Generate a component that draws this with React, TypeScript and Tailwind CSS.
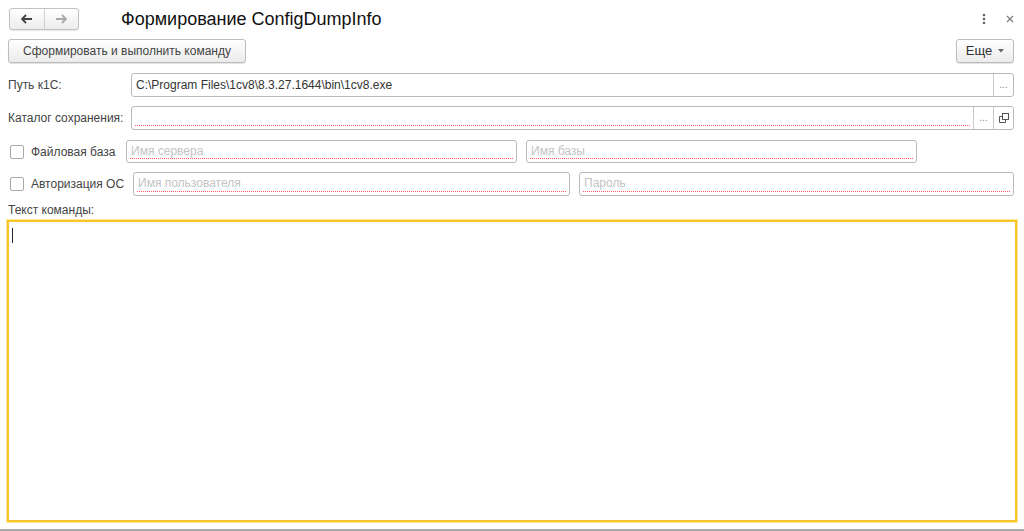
import React from 'react'

function Field({ value, placeholder, required, className = '', children }: { value?: string; placeholder?: string; required?: boolean; className?: string; children?: React.ReactNode }) {
  return (
    <div className={`flex h-[24px] border border-[#b9b9b9] rounded-[3px] bg-white overflow-hidden ${className}`}>
      <div className="flex-1 px-[3px] pt-[2px] pb-[3px] flex">
        <div className={`flex-1 flex items-center pl-[1px] ${required ? 'border-b border-dotted border-[#ff5c5c]' : ''}`}>
          {value ? (
            <span className="text-[#333]">{value}</span>
          ) : (
            <span className="text-[#c4c4c4]">{placeholder}</span>
          )}
        </div>
      </div>
      {children}
    </div>
  )
}

function Checkbox({ label, width }: { label: string; width: string }) {
  return (
    <div className={`flex items-center gap-[7px] pl-[10px] shrink-0 whitespace-nowrap ${width}`}>
      <div className="w-[14px] h-[14px] border border-[#a9a9a9] rounded-[2px] bg-white" />
      <span className="text-[#444]">{label}</span>
    </div>
  )
}

export default function App() {
  return (
    <div
      className="w-[1024px] h-[531px] bg-white flex flex-col text-[12px] overflow-hidden"
      style={{ fontFamily: '"Liberation Sans", Arial, sans-serif' }}
    >
      {/* Header */}
      <div className="flex items-center h-[22px] mt-[8px] pl-[9px] pr-[10px]">
        <div className="flex h-[22px] w-[70px] border border-[#c2c2c2] rounded-[3px] bg-gradient-to-b from-white to-[#ececec] shadow-[0_1px_1px_rgba(0,0,0,0.1)]">
          <div className="flex-1 flex items-center justify-center border-r border-[#d0d0d0]">
            <svg width="12" height="10" viewBox="0 0 12 10">
              <path d="M1 5h10M5 1L1 5l4 4" stroke="#444" strokeWidth="1.8" fill="none" />
            </svg>
          </div>
          <div className="flex-1 flex items-center justify-center">
            <svg width="12" height="10" viewBox="0 0 12 10">
              <path d="M1 5h10M7 1l4 4-4 4" stroke="#a8a8a8" strokeWidth="1.8" fill="none" />
            </svg>
          </div>
        </div>
        <div className="ml-[42px] text-[18px] text-[#111]">Формирование ConfigDumpInfo</div>
        <div className="ml-auto flex items-center gap-[20px]">
          <svg width="4" height="12" viewBox="0 0 4 12">
            <circle cx="2" cy="2" r="1.3" fill="#666" />
            <circle cx="2" cy="6" r="1.3" fill="#666" />
            <circle cx="2" cy="10" r="1.3" fill="#666" />
          </svg>
          <svg width="8" height="8" viewBox="0 0 8 8">
            <path d="M1 1l6 6M7 1L1 7" stroke="#777" strokeWidth="1.1" />
          </svg>
        </div>
      </div>

      {/* Command bar */}
      <div className="flex items-center mt-[9px] px-[8px]">
        <button className="h-[24px] w-[238px] border border-[#bdbdbd] rounded-[3px] bg-gradient-to-b from-white to-[#ebebeb] shadow-[0_1px_1px_rgba(0,0,0,0.12)] text-[#444]">
          Сформировать и выполнить команду
        </button>
        <button className="ml-auto mr-[2px] h-[24px] w-[58px] border border-[#bdbdbd] rounded-[3px] bg-gradient-to-b from-white to-[#ebebeb] shadow-[0_1px_1px_rgba(0,0,0,0.12)] text-[#333] text-[13px] flex items-center justify-center gap-[6px]">
          Еще
          <svg width="6" height="4" viewBox="0 0 6 4">
            <path d="M0 0h6L3 3.5z" fill="#666" />
          </svg>
        </button>
      </div>

      {/* Path */}
      <div className="flex items-center mt-[10px] pl-[8px] pr-[10px]">
        <span className="w-[123px] shrink-0 whitespace-nowrap text-[#444]">Путь к1С:</span>
        <Field value="C:\Program Files\1cv8\8.3.27.1644\bin\1cv8.exe" className="flex-1">
          <div className="w-[20px] border-l border-[#c9c9c9] flex items-end justify-center pb-[6px] text-[#888] text-[10px] leading-none">...</div>
        </Field>
      </div>

      {/* Save dir */}
      <div className="flex items-center mt-[9px] pl-[8px] pr-[10px]">
        <span className="w-[123px] shrink-0 whitespace-nowrap text-[#444]">Каталог сохранения:</span>
        <Field required className="flex-1">
          <div className="w-[20px] border-l border-[#c9c9c9] flex items-end justify-center pb-[6px] text-[#888] text-[10px] leading-none">...</div>
          <div className="w-[20px] border-l border-[#c9c9c9] flex items-center justify-center">
            <svg width="10" height="10" viewBox="0 0 10 10">
              <rect x="3.5" y="0.5" width="6" height="6" fill="none" stroke="#555" />
              <path d="M3.5 3.5H0.5v6h6V6.5" fill="none" stroke="#555" />
            </svg>
          </div>
        </Field>
      </div>

      {/* File base */}
      <div className="flex items-center mt-[10px] pr-[10px]">
        <Checkbox label="Файловая база" width="w-[126px]" />
        <Field required placeholder="Имя сервера" className="w-[391px] !h-[23px]" />
        <Field required placeholder="Имя базы" className="ml-[9px] w-[391px] !h-[23px]" />
      </div>

      {/* OS auth */}
      <div className="flex items-center mt-[9px] pr-[10px]">
        <Checkbox label="Авторизация ОС" width="w-[133px]" />
        <Field required placeholder="Имя пользователя" className="w-[437px]" />
        <Field required placeholder="Пароль" className="ml-[9px] flex-1" />
      </div>

      <div className="mt-[7px] pl-[8px] text-[#444] leading-[15px]">Текст команды:</div>

      <div className="mt-[2px] ml-[7px] mr-[7px] h-[302px] border-2 border-[#f8c62b] shadow-[0_0_0_1px_#fde59a] bg-white pl-[3px] pt-[6px]">
        <div className="w-[1px] h-[15px] bg-[#222]" />
      </div>

      <div className="mt-auto h-[2px] bg-[#a9a9a9]" />
    </div>
  )
}
